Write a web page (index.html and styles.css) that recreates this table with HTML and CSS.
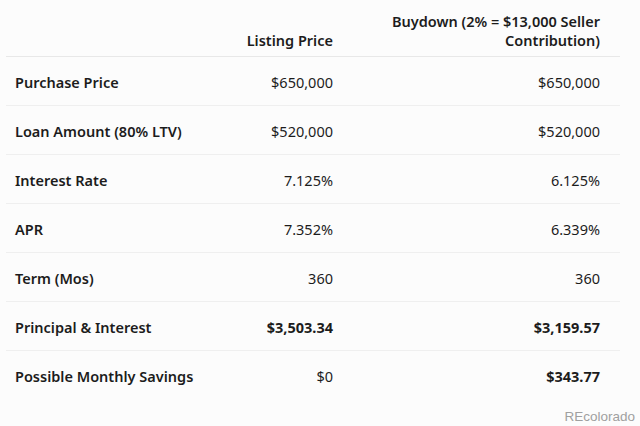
FILE: index.html
```html
<!DOCTYPE html>
<html>
<head>
<meta charset="utf-8">
<link rel="stylesheet" href="styles.css">
</head>
<body>
<div class="page">
  <table class="cmp">
    <colgroup>
      <col class="c1"><col class="c2"><col class="c3">
    </colgroup>
    <thead>
      <tr>
        <th></th>
        <th class="num">Listing Price</th>
        <th class="num last">Buydown (2% = $13,000 Seller<br>Contribution)</th>
      </tr>
    </thead>
    <tbody>
      <tr><td class="lbl">Purchase Price</td><td class="num">$650,000</td><td class="num last">$650,000</td></tr>
      <tr><td class="lbl">Loan Amount (80% LTV)</td><td class="num">$520,000</td><td class="num last">$520,000</td></tr>
      <tr><td class="lbl">Interest Rate</td><td class="num">7.125%</td><td class="num last">6.125%</td></tr>
      <tr><td class="lbl">APR</td><td class="num">7.352%</td><td class="num last">6.339%</td></tr>
      <tr><td class="lbl">Term (Mos)</td><td class="num">360</td><td class="num last">360</td></tr>
      <tr><td class="lbl">Principal &amp; Interest</td><td class="num b">$3,503.34</td><td class="num last b">$3,159.57</td></tr>
      <tr class="end"><td class="lbl">Possible Monthly Savings</td><td class="num">$0</td><td class="num last b">$343.77</td></tr>
    </tbody>
  </table>
  <div class="mark">REcolorado</div>
</div>
</body>
</html>
```

FILE: styles.css
```css
html, body {
  margin: 0;
  padding: 0;
  background: #fcfcfc;
}
.page {
  width: 640px;
  height: 426px;
  position: relative;
  font-family: "Noto Sans", "Open Sans", sans-serif;
  color: #1c1c1c;
  font-size: 14.5px;
}
.cmp {
  margin-left: 6px;
  width: 614px;
  border-collapse: collapse;
  table-layout: fixed;
}
.c1 { width: 200px; }
.c2 { width: 136px; }
.c3 { width: 278px; }
th {
  height: 50px;
  vertical-align: bottom;
  font-weight: 600;
  line-height: 19px;
  padding: 0 9px 6px 9px;
  border-bottom: 1px solid #e8e8e8;
}
td {
  height: 47px;
  padding: 1px 9px 0 9px;
  vertical-align: middle;
  border-bottom: 1px solid #efefef;
  white-space: nowrap;
}
tr.end td { border-bottom: none; }
.lbl { font-weight: 600; }
.num { text-align: right; }
.last { padding-right: 20px; }
.b { font-weight: 700; }
.mark {
  position: absolute;
  right: 5px;
  bottom: 2px;
  font-family: "Liberation Sans", Arial, sans-serif;
  font-size: 13.5px;
  color: #a0a0a0;
}
```
